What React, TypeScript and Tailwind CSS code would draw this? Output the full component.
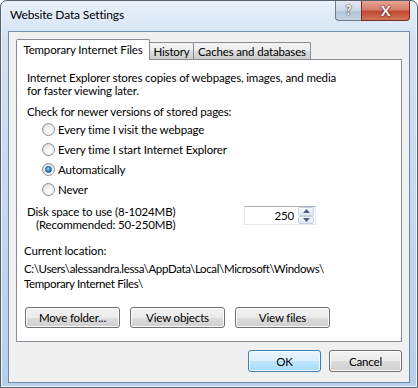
import type { ReactNode } from "react";

const FONT = { fontFamily: 'Lato, "Noto Sans", sans-serif' };

function Radio({ checked, children }: { checked?: boolean; children: ReactNode }) {
  return (
    <div className="flex h-[20px] items-center gap-[3px] pl-[15px]">
      <span className="flex h-[13px] w-[13px] items-center justify-center rounded-full border border-[#8e8f8f] bg-[radial-gradient(circle_at_60%_65%,#ffffff_0%,#f2f2f2_40%,#d4d4d4_100%)]">
        {checked && (
          <span className="h-[7px] w-[7px] rounded-full border border-[#1c5180] bg-[radial-gradient(circle_at_40%_35%,#a6d6ff_0%,#3c8fd9_45%,#14508c_100%)]" />
        )}
      </span>
      <span>{children}</span>
    </div>
  );
}

function Button({ children, w = "w-[95px]", h = "h-[21px]", def }: {
  children: ReactNode; w?: string; h?: string; def?: boolean;
}) {
  return (
    <div
      className={`${w} ${h} flex items-center justify-center rounded-[3px] border ${
        def
          ? "border-[#3c7fb1] bg-[linear-gradient(#eaf6fd_0%,#d9f0fc_50%,#bee6fd_51%,#a7d9f5_100%)] shadow-[inset_0_0_0_1px_#f4fbff]"
          : "border-[#707070] bg-[linear-gradient(#f2f2f2_0%,#ebebeb_50%,#dddddd_51%,#cfcfcf_100%)] shadow-[inset_0_0_0_1px_#fcfcfc]"
      }`}
    >
      {children}
    </div>
  );
}

function Tab({ active, children, w }: { active?: boolean; children: ReactNode; w: string }) {
  return active ? (
    <div className={`${w} relative z-10 -mb-px flex h-[21px] items-start justify-center whitespace-nowrap rounded-t-[2px] border border-b-0 border-[#898c95] bg-white pt-[3px]`}>
      {children}
    </div>
  ) : (
    <div className={`${w} -ml-px flex h-[17px] items-center justify-center whitespace-nowrap rounded-t-[2px] border border-b-0 border-[#898c95] bg-[linear-gradient(#f3f3f3_0%,#ebebeb_50%,#dddddd_51%,#cdcdcd_100%)]`}>
      {children}
    </div>
  );
}

export default function App() {
  return (
    <div
      style={FONT}
      className="flex h-[388px] w-[418px] flex-col rounded-t-[7px] border border-[#55606d] bg-[linear-gradient(180deg,#e9f1fa_0%,#d3e2f3_10%,#c4d8ee_55%,#b8cfe9_100%)] text-[11.5px] leading-[13px] tracking-[-0.15px] text-[#000] shadow-[inset_0_0_0_1px_#eef4fb]"
    >
      {/* title bar */}
      <div className="flex h-[30px] shrink-0 items-start justify-between">
        <div className="pl-[9px] pt-[7px] text-[12px] text-black">Website Data Settings</div>
        <div className="mr-[7px] flex">
          <div className="flex h-[20px] w-[27px] items-center justify-center rounded-bl-[4px] border border-t-0 border-[#6b7d92] bg-[linear-gradient(#dfe7f1_0%,#cdd8e6_50%,#b4c3d6_51%,#c5d3e4_100%)] text-[13px] font-bold text-white [text-shadow:0_0_2px_#333,0_0_1px_#333]">
            ?
          </div>
          <div className="-ml-px flex h-[20px] w-[49px] items-center justify-center rounded-br-[4px] border border-t-0 border-[#7a2a1f] bg-[linear-gradient(#e8a493_0%,#d47f6a_45%,#c24a33_55%,#d2745c_100%)] text-[14px] font-bold text-white [text-shadow:0_0_2px_#4a1208,0_0_1px_#4a1208]">
            X
          </div>
        </div>
      </div>

      {/* client area */}
      <div className="mx-[7px] mb-[4px] flex flex-1 flex-col border border-[#6f8aa8] bg-[#f0f0f0] px-[7px] pt-[7px]">
        <div className="flex h-[20px] items-end">
          <Tab active w="w-[134px]">Temporary Internet Files</Tab>
          <Tab w="w-[45px]">History</Tab>
          <Tab w="w-[118px]">Caches and databases</Tab>
        </div>

        <div className="flex h-[283px] flex-col border border-[#898c95] bg-white px-[10px] pt-[11px]">
          <p>
            Internet Explorer stores copies of webpages, images, and media
            <br />
            for faster viewing later.
          </p>
          <p className="mt-[8px]">Check for newer versions of stored pages:</p>
          <div className="mt-[1px] flex flex-col">
            <Radio>Every time I visit the webpage</Radio>
            <Radio>Every time I start Internet Explorer</Radio>
            <Radio checked>Automatically</Radio>
            <Radio>Never</Radio>
          </div>

          <div className="mt-[6px] flex items-start">
            <div className="w-[217px]">
              <div>Disk space to use (8-1024MB)</div>
              <div className="pl-[9px]">(Recommended: 50-250MB)</div>
            </div>
            <div className="mt-px flex h-[19px] w-[72px] items-center border border-[#abadb3] border-r-[#e3e9ef] border-b-[#e3e9ef] border-l-[#e2e3ea] bg-white">
              <span className="flex-1 pr-[4px] text-right">250</span>
              <div className="mr-px flex h-[17px] w-[16px] flex-col">
                <div className="flex flex-1 items-center justify-center rounded-[2px] border border-[#c2d2e3] bg-[linear-gradient(#f6f9fc,#dfe8f2)]">
                  <svg width="7" height="4" viewBox="0 0 7 4"><path d="M3.5 0L7 4H0z" fill="#4d6185" /></svg>
                </div>
                <div className="flex flex-1 items-center justify-center rounded-[2px] border border-[#c2d2e3] bg-[linear-gradient(#f6f9fc,#dfe8f2)]">
                  <svg width="7" height="4" viewBox="0 0 7 4"><path d="M0 0H7L3.5 4z" fill="#4d6185" /></svg>
                </div>
              </div>
            </div>
          </div>

          <div className="-ml-[3px] mt-[13px]">Current location:</div>
          <div className="-ml-[3px] mt-[4px] leading-[15px] tracking-[-0.35px]">
            C:\Users\alessandra.lessa\AppData\Local\Microsoft\Windows\
            <br />
            Temporary Internet Files\
          </div>

          <div className="-ml-[2px] mt-[16px] flex gap-[10px]">
            <Button>Move folder...</Button>
            <Button>View objects</Button>
            <Button>View files</Button>
          </div>
        </div>

        <div className="mt-[8px] flex justify-end gap-[8px]">
          <Button def w="w-[73px]" h="h-[22px]">OK</Button>
          <Button w="w-[73px]" h="h-[22px]">Cancel</Button>
        </div>
      </div>
    </div>
  );
}
